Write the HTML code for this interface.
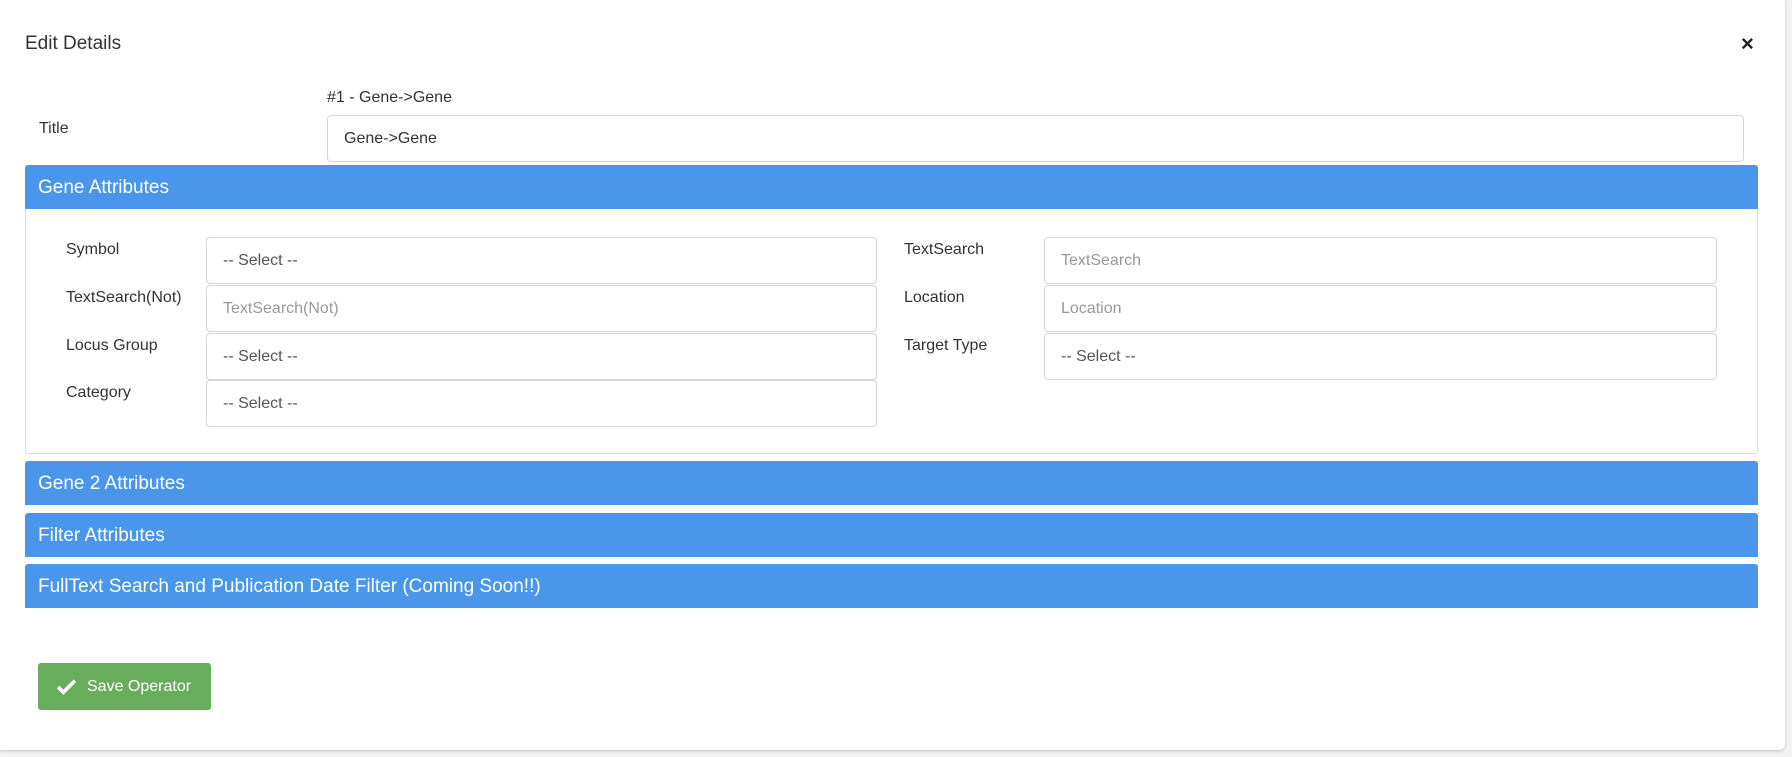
<!DOCTYPE html>
<html><head><style>
body{margin:0;width:1792px;height:757px;background:#f2f2f2;font-family:"Liberation Sans",sans-serif;position:relative;overflow:hidden}
.modal{position:absolute;left:0;top:0;width:1785px;height:750px;background:#fff;border-radius:0 0 6px 0;box-shadow:0 1px 3px rgba(0,0,0,.2)}
.a{position:absolute}
.t{color:#333;font-size:16px}
.inp{position:absolute;border:1px solid #d6d6d6;border-radius:4px;background:#fff;box-sizing:border-box;font-size:16px;padding-left:16px;display:flex;align-items:center}
.hd{position:absolute;left:25px;width:1733px;height:44px;background:#4a96ea;color:#fff;font-size:19px;box-sizing:border-box;padding-left:13px;padding-top:2px;display:flex;align-items:center;border-radius:3px 3px 0 0}
</style></head><body>
<div class="modal">
<div class="a" style="left:25px;top:33px;font-size:19px;color:#333">Edit Details</div>
<div class="a" style="left:1741px;top:31px;font-size:22px;font-weight:bold;color:#222">×</div>
<div class="a t" style="left:327px;top:89px">#1 - Gene-&gt;Gene</div>
<div class="a t" style="left:39px;top:120px">Title</div>
<div class="inp" style="left:327px;top:115px;width:1417px;height:47px;color:#333">Gene-&gt;Gene</div>
<div class="hd" style="top:165px">Gene Attributes</div>
<div class="a" style="left:25px;top:209px;width:1733px;height:245px;border:1px solid #ddd;border-top:none;box-sizing:border-box;border-radius:0 0 3px 3px"></div>
<div class="a t" style="left:66px;top:241px">Symbol</div>
<div class="a t" style="left:66px;top:289px">TextSearch(Not)</div>
<div class="a t" style="left:66px;top:337px">Locus Group</div>
<div class="a t" style="left:66px;top:384px">Category</div>
<div class="inp" style="left:206px;top:237px;width:671px;height:47px;color:#555">-- Select --</div>
<div class="inp" style="left:206px;top:285px;width:671px;height:47px;color:#999">TextSearch(Not)</div>
<div class="inp" style="left:206px;top:333px;width:671px;height:47px;color:#555">-- Select --</div>
<div class="inp" style="left:206px;top:380px;width:671px;height:47px;color:#555">-- Select --</div>
<div class="a t" style="left:904px;top:241px">TextSearch</div>
<div class="a t" style="left:904px;top:289px">Location</div>
<div class="a t" style="left:904px;top:337px">Target Type</div>
<div class="inp" style="left:1044px;top:237px;width:673px;height:47px;color:#999">TextSearch</div>
<div class="inp" style="left:1044px;top:285px;width:673px;height:47px;color:#999">Location</div>
<div class="inp" style="left:1044px;top:333px;width:673px;height:47px;color:#555">-- Select --</div>
<div class="hd" style="top:461px">Gene 2 Attributes</div>
<div class="hd" style="top:513px">Filter Attributes</div>
<div class="hd" style="top:564px">FullText Search and Publication Date Filter (Coming Soon!!)</div>
<div class="a" style="left:38px;top:663px;width:173px;height:47px;background:#68ad5c;border-radius:3px;color:#fff;font-size:16px;display:flex;align-items:center">
<svg width="21" height="17" viewBox="0 0 20 16" style="margin-left:18px;margin-right:10px"><path d="M2 8.5l5 5L18 2.5" stroke="#fff" stroke-width="3.5" fill="none"/></svg>Save Operator</div>
</div>
</body></html>
